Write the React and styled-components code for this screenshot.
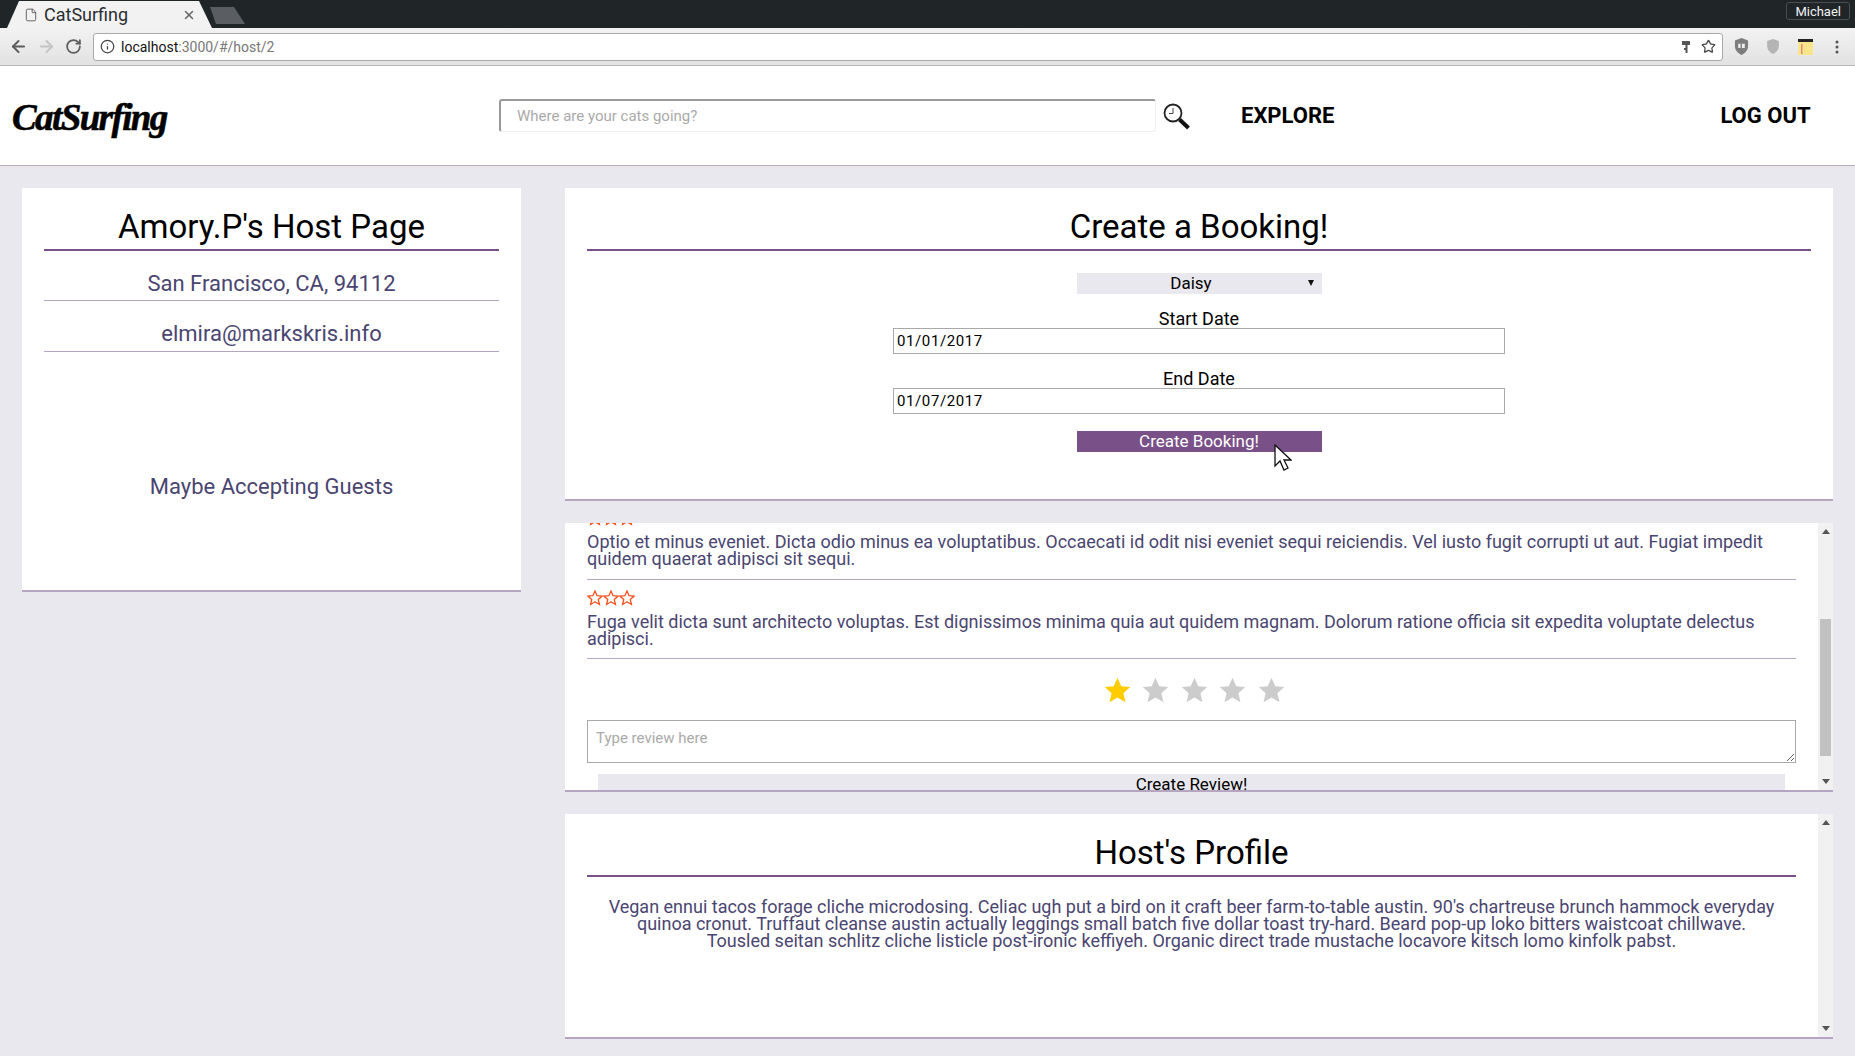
import React from "react";
import styled, { createGlobalStyle } from "styled-components";
import { ArrowLeft, ArrowRight, RotateCw, Info, Star, X, File } from "lucide-react";

const GlobalStyle = createGlobalStyle`
  html, body {
    margin: 0;
    height: 1056px;
    overflow: hidden;
    background-color: #e9e8ee;
    font-family: Roboto, "Liberation Sans", sans-serif;
  }
  * { box-sizing: border-box; }
`;

const TabStrip = styled.div`
  display: flex;
  align-items: flex-end;
  height: 28px;
  padding: 0 5px 0 7px;
  background-color: #202528;
`;

const ActiveTab = styled.div`
  display: flex;
  align-items: center;
  width: 205px;
  height: 27px;
  padding: 0 16px 0 17px;
  background-color: #f2f2f2;
  clip-path: polygon(0 100%, 12px 0, 192px 0, 100% 100%);
  color: #2a2d30;
  font-size: 18px;
`;

const TabTitle = styled.span`
  flex: 1;
  margin-left: 6px;
`;

const GhostTab = styled.div`
  width: 35px;
  height: 17px;
  margin: 0 0 4px -2px;
  background-color: #5a5e62;
  clip-path: polygon(0 0, 24px 0, 100% 100%, 6px 100%);
`;

const ProfileChip = styled.div`
  margin: 2px 0 auto auto;
  padding: 0 8px;
  height: 18px;
  border: 1px solid #4a4e52;
  border-radius: 3px;
  color: #f2f2f2;
  font-size: 13px;
  line-height: 17px;
`;

const Toolbar = styled.div`
  display: flex;
  align-items: center;
  height: 38px;
  padding: 0 0 0 9px;
  background: linear-gradient(#f2f2f2, #e2e2e2);
  border-bottom: 1px solid #b5b5b5;
`;

const NavIcon = styled.span`
  display: flex;
  width: 28px;
  color: ${(p) => p.$color || "#5d5d5d"};
`;

const Omnibox = styled.div`
  display: flex;
  flex: none;
  align-items: center;
  width: 1630px;
  height: 28px;
  padding: 0 6px 0 6px;
  background-color: #fff;
  border: 1px solid #a9a9a9;
  border-radius: 3px;
  font-size: 14px;
`;

const Host = styled.span`
  margin-left: 6px;
  color: #111;
`;

const UrlPath = styled.span`
  flex: 1;
  color: #777;
`;

const KeyIcon = styled.svg`
  width: 10px;
  height: 14px;
  margin-right: 10px;
`;

const ExtensionSlot = styled.span`
  display: flex;
  flex: none;
  justify-content: center;
  width: 32px;
  margin-left: ${(p) => p.$first || 0}px;
`;

const Nav = styled.nav`
  display: flex;
  align-items: center;
  height: 100px;
  padding: 0 45px 0 12px;
  background-color: #fff;
  border-bottom: 1px solid #b9a9c4;
  color: #000;
`;

const Logo = styled.div`
  flex: none;
  width: 487px;
  margin-top: 4px;
  font-family: "Liberation Serif", serif;
  font-size: 37px;
  font-style: italic;
  font-weight: 700;
  letter-spacing: -1.6px;
  -webkit-text-stroke: 0.6px #000;
`;

const SearchInput = styled.input`
  flex: none;
  width: 657px;
  height: 33px;
  margin-top: -1px;
  padding: 0 16px;
  background-color: #fff;
  border: 1px solid #eee;
  border-top: 2px solid #999;
  border-left: 2px solid #999;
  border-radius: 3px;
  font-family: inherit;
  font-size: 15px;
  outline: none;
  &::placeholder { color: #aaa; }
`;

const SearchIcon = styled.svg`
  flex: none;
  width: 28px;
  height: 27px;
  margin: 2px 0 0 7px;
`;

const NavLink = styled.a`
  margin: 0 0 0 ${(p) => p.$gap}px;
  font-size: 22px;
  font-weight: 700;
  white-space: nowrap;
`;

const Main = styled.main`
  display: flex;
  align-items: flex-start;
  gap: 44px;
  padding: 22px 22px 0;
`;

const LeftColumn = styled.aside`
  width: 499px;
`;

const RightColumn = styled.div`
  display: flex;
  flex-direction: column;
  gap: 22px;
  width: 1268px;
`;

const Card = styled.section`
  height: ${(p) => p.$height}px;
  padding: 0 22px;
  background-color: #fff;
  border-bottom: 2px solid #b5a5c0;
`;

const CardTitle = styled.h2`
  height: 63px;
  margin: 0;
  padding-top: 19px;
  border-bottom: 2px solid #7a5088;
  color: #000;
  font-size: 33px;
  font-weight: 400;
  line-height: 40px;
  text-align: center;
`;

const InfoRow = styled.div`
  height: 51px;
  padding-top: 19px;
  border-bottom: 1px solid #b5a5c0;
  color: #4a4570;
  font-size: 22px;
  line-height: 28px;
  text-align: center;
  &:first-of-type { height: 50px; }
`;

const GuestStatus = styled.div`
  margin-top: 120px;
  color: #4a4570;
  font-size: 22px;
  line-height: 30px;
  text-align: center;
`;

const BookingForm = styled.form`
  display: flex;
  flex-direction: column;
  align-items: center;
  padding-top: 22px;
`;

const SelectWrap = styled.div`
  position: relative;
  width: 245px;
  height: 21px;
`;

const PetSelect = styled.select`
  display: block;
  width: 100%;
  height: 100%;
  padding: 0 16px 2px 0;
  appearance: none;
  background-color: #e9e8ee;
  border: 0;
  border-radius: 0;
  color: #000;
  font-family: inherit;
  font-size: 17px;
  text-align-last: center;
`;

const SelectArrow = styled.span`
  position: absolute;
  top: 7px;
  right: 8px;
  border-top: 6px solid #111;
  border-left: 3px solid transparent;
  border-right: 3px solid transparent;
`;

const FieldLabel = styled.label`
  margin-top: 16px;
  color: #000;
  font-size: 18px;
  line-height: 18px;
`;

const DateInput = styled.input`
  width: 612px;
  height: 26px;
  padding: 0 3px;
  border: 1px solid #a9a9a9;
  color: #000;
  font-family: inherit;
  font-size: 15px;
  letter-spacing: 0.6px;
  outline: none;
`;

const BookButton = styled.button`
  width: 245px;
  height: 21px;
  margin-top: 17px;
  padding: 0 0 2px;
  background-color: #7a5089;
  border: 0;
  color: #fff;
  font-family: inherit;
  font-size: 17px;
`;

const Panel = styled.section`
  display: flex;
  height: ${(p) => p.$height}px;
  background-color: #fff;
  border-bottom: 2px solid #b5a5c0;
`;

const PanelBody = styled.div`
  flex: 1;
  min-width: 0;
  padding: 0 22px;
  overflow: hidden;
`;

const Track = styled.div`
  display: flex;
  flex-direction: column;
  align-items: center;
  width: 15px;
  padding: 6px 0;
  background-color: #f1f1f1;
`;

const ArrowUp = styled.span`
  border-bottom: 5px solid #555;
  border-left: 4px solid transparent;
  border-right: 4px solid transparent;
`;

const ArrowDown = styled.span`
  margin-top: auto;
  border-top: 5px solid #555;
  border-left: 4px solid transparent;
  border-right: 4px solid transparent;
`;

const Thumb = styled.div`
  width: 11px;
  height: 137px;
  margin-top: ${(p) => p.$top}px;
  background-color: #c1c1c1;
`;

const Review = styled.article`
  height: ${(p) => p.$height}px;
  margin-top: ${(p) => p.$shift || 0}px;
  padding-top: 10px;
  border-bottom: 1px solid #b5a5c0;
  color: #4a4570;
  font-size: 18px;
  line-height: 17px;
`;

const ReviewStars = styled.div`
  display: flex;
  height: 23px;
`;

const RatingRow = styled.div`
  display: flex;
  justify-content: center;
  gap: 9.500px;
  height: 29px;
  margin-top: 17px;
  padding-left: 5px;
`;

const ReviewBox = styled.textarea`
  display: block;
  width: 100%;
  height: 43px;
  margin-top: 15px;
  padding: 8px;
  border: 1px solid #a9a9a9;
  font-family: inherit;
  font-size: 15px;
  outline: none;
  &::placeholder { color: #aaa; }
`;

const ReviewButton = styled.button`
  display: block;
  width: 1187px;
  height: 21px;
  margin: 11px auto 0;
  padding: 0 0 2px;
  background-color: #e9e8ee;
  border: 0;
  color: #000;
  font-family: inherit;
  font-size: 17px;
`;

const ProfileText = styled.p`
  margin: 21px 0 0;
  padding: 0 18px;
  color: #4a4570;
  font-size: 18px;
  line-height: 17px;
  text-align: center;
`;

const Pointer = styled.svg`
  position: absolute;
  left: 1274px;
  top: 444px;
  width: 18px;
  height: 28px;
`;

const starPath = "M12 1.5l3.1 7 7.4.7-5.6 5 1.7 7.5-6.6-4-6.6 4 1.7-7.5-5.6-5 7.4-.7z";

const OutlineStar = () => (
  <svg width="16" height="16" viewBox="0 0 24 24" fill="none" stroke="#f4511e" strokeWidth="2">
    <path d={starPath} />
  </svg>
);

const RatingStar = ({ active }) => (
  <svg width="29" height="29" viewBox="0 0 24 24" fill={active ? "#ffcc00" : "#cccccc"}>
    <path d={starPath} />
  </svg>
);

const reviews = [
  {
    id: 1,
    height: 80,
    shift: -23,
    text: "Optio et minus eveniet. Dicta odio minus ea voluptatibus. Occaecati id odit nisi eveniet sequi reiciendis. Vel iusto fugit corrupti ut aut. Fugiat impedit quidem quaerat adipisci sit sequi.",
  },
  {
    id: 2,
    height: 79,
    text: "Fuga velit dicta sunt architecto voluptas. Est dignissimos minima quia aut quidem magnam. Dolorum ratione officia sit expedita voluptate delectus adipisci.",
  },
];

const App = () => (
  <>
    <GlobalStyle />
    <TabStrip>
      <ActiveTab>
        <File size={14} strokeWidth={1.5} color="#555" />
        <TabTitle>CatSurfing</TabTitle>
        <X size={14} strokeWidth={2.5} color="#666" />
      </ActiveTab>
      <GhostTab />
      <ProfileChip>Michael</ProfileChip>
    </TabStrip>
    <Toolbar>
      <NavIcon><ArrowLeft size={19} strokeWidth={2.5} /></NavIcon>
      <NavIcon $color="#c4c4c4"><ArrowRight size={19} strokeWidth={2.5} /></NavIcon>
      <NavIcon><RotateCw size={17} strokeWidth={2.5} /></NavIcon>
      <Omnibox>
        <Info size={15} color="#444" />
        <Host>localhost</Host>
        <UrlPath>:3000/#/host/2</UrlPath>
        <KeyIcon viewBox="0 0 10 14">
          <path d="M1 1h8v4H6.500v8H4.500v-3H3V8h1.500V5H1z" fill="#555" />
        </KeyIcon>
        <Star size={15} color="#444" strokeWidth={2} />
      </Omnibox>
      <ExtensionSlot $first={2}>
        <svg width="15" height="17" viewBox="0 0 16 18">
          <path d="M8 0l7 2.500v6c0 4.500-3 7.500-7 9.500-4-2-7-5-7-9.500v-6z" fill="#7d7d7d" />
          <path d="M4.500 6v4.500h2.500V6zM8.500 6v4.500h3V6z" fill="#eee" />
        </svg>
      </ExtensionSlot>
      <ExtensionSlot>
        <svg width="14" height="15" viewBox="0 0 16 18">
          <path d="M8 0l7 2.500v6c0 4.500-3 7.500-7 9.500-4-2-7-5-7-9.500v-6z" fill="#b4b4b4" />
        </svg>
      </ExtensionSlot>
      <ExtensionSlot>
        <svg width="15" height="16" viewBox="0 0 15 16">
          <rect width="15" height="16" fill="#f6e58a" />
          <rect width="15" height="3" fill="#222" />
          <rect x="3" y="5" width="1.500" height="10" fill="#e08a80" />
        </svg>
      </ExtensionSlot>
      <ExtensionSlot>
        <svg width="4" height="14" viewBox="0 0 4 14" fill="#555">
          <circle cx="2" cy="2" r="1.500" />
          <circle cx="2" cy="7" r="1.500" />
          <circle cx="2" cy="12" r="1.500" />
        </svg>
      </ExtensionSlot>
    </Toolbar>
    <Nav>
      <Logo>CatSurfing</Logo>
      <SearchInput placeholder="Where are your cats going?" />
      <SearchIcon viewBox="0 0 28 27">
        <circle cx="10" cy="10" r="8.500" fill="#fff" stroke="#222" strokeWidth="1.800" />
        <path d="M10 5v5.500H6" fill="none" stroke="#444" strokeWidth="1" />
        <path d="M16.500 16.500l9 8.500" stroke="#111" strokeWidth="4" />
      </SearchIcon>
      <NavLink $gap={50}>EXPLORE</NavLink>
      <NavLink $gap={386}>LOG OUT</NavLink>
    </Nav>
    <Main>
      <LeftColumn>
        <Card $height={404}>
          <CardTitle>Amory.P's Host Page</CardTitle>
          <InfoRow>San Francisco, CA, 94112</InfoRow>
          <InfoRow>elmira@markskris.info</InfoRow>
          <GuestStatus>Maybe Accepting Guests</GuestStatus>
        </Card>
      </LeftColumn>
      <RightColumn>
        <Card $height={313}>
          <CardTitle>Create a Booking!</CardTitle>
          <BookingForm>
            <SelectWrap>
              <PetSelect defaultValue="Daisy">
                <option>Daisy</option>
              </PetSelect>
              <SelectArrow />
            </SelectWrap>
            <FieldLabel>Start Date</FieldLabel>
            <DateInput readOnly value="01/01/2017" />
            <FieldLabel>End Date</FieldLabel>
            <DateInput readOnly value="01/07/2017" />
            <BookButton type="button">Create Booking!</BookButton>
          </BookingForm>
        </Card>
        <Panel $height={269}>
          <PanelBody>
            {reviews.map((review) => (
              <Review key={review.id} $height={review.height} $shift={review.shift}>
                <ReviewStars>
                  <OutlineStar />
                  <OutlineStar />
                  <OutlineStar />
                </ReviewStars>
                {review.text}
              </Review>
            ))}
            <RatingRow>
              <RatingStar active />
              <RatingStar />
              <RatingStar />
              <RatingStar />
              <RatingStar />
            </RatingRow>
            <ReviewBox placeholder="Type review here" />
            <ReviewButton type="button">Create Review!</ReviewButton>
          </PanelBody>
          <Track>
            <ArrowUp />
            <Thumb $top={85} />
            <ArrowDown />
          </Track>
        </Panel>
        <Panel $height={225}>
          <PanelBody>
            <CardTitle>Host's Profile</CardTitle>
            <ProfileText>
              Vegan ennui tacos forage cliche microdosing. Celiac ugh put a bird on it craft beer farm-to-table austin. 90's chartreuse brunch hammock everyday quinoa cronut. Truffaut cleanse austin actually leggings small batch five dollar toast try-hard. Beard pop-up loko bitters waistcoat chillwave. Tousled seitan schlitz cliche listicle post-ironic keffiyeh. Organic direct trade mustache locavore kitsch lomo kinfolk pabst.
            </ProfileText>
          </PanelBody>
          <Track>
            <ArrowUp />
            <ArrowDown />
          </Track>
        </Panel>
      </RightColumn>
    </Main>
    <Pointer viewBox="0 0 18 28">
      <path d="M1 1v21l5-5 4 9 4-2-4-8h7z" fill="#fff" stroke="#111" strokeWidth="1.300" />
    </Pointer>
  </>
);

export default App;
